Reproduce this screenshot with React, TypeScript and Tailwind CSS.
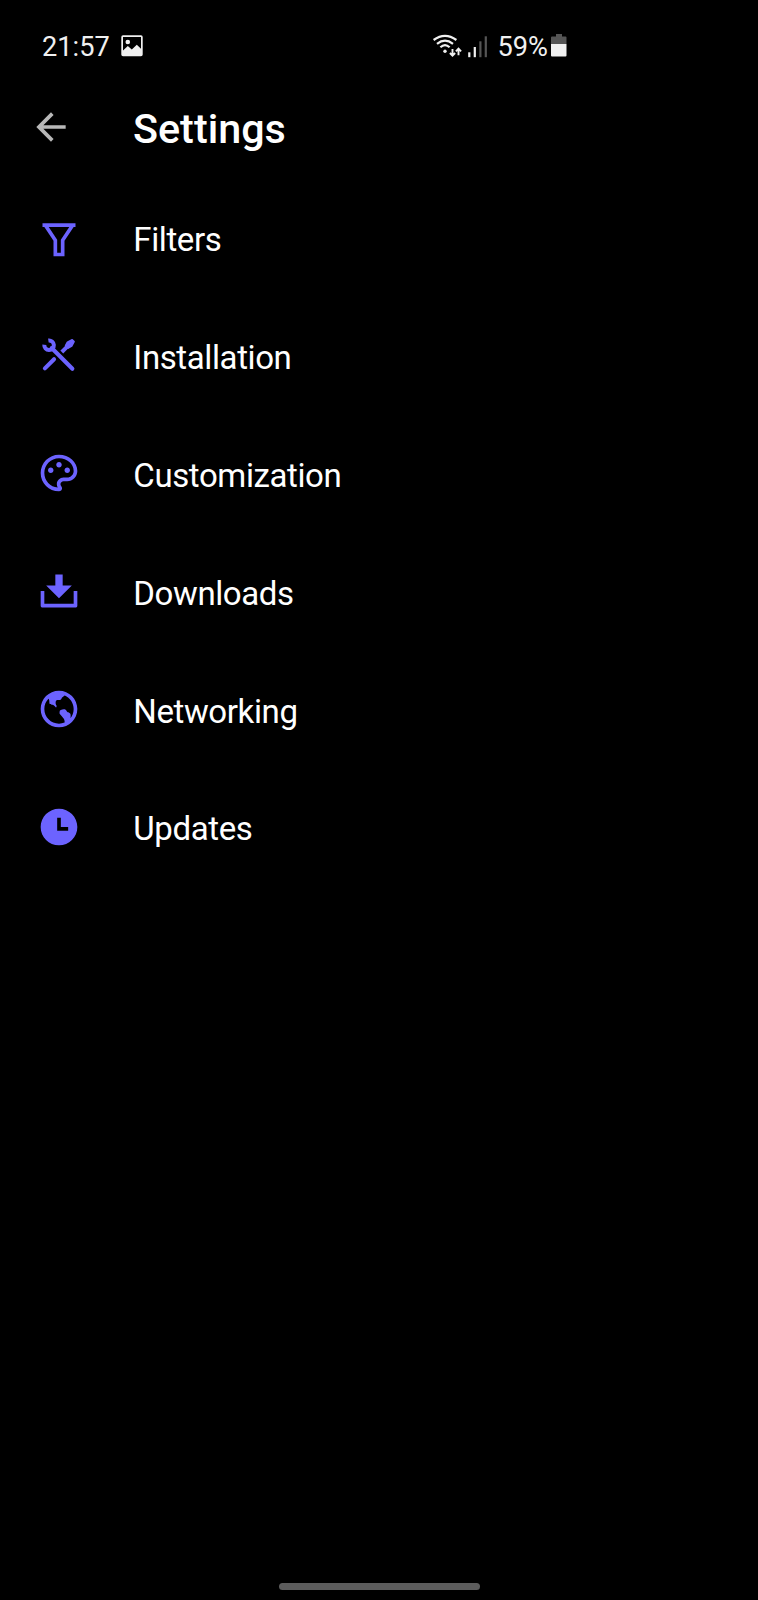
import type { ComponentType } from "react";
import { MdArrowBack } from "react-icons/md";
import { RiDownload2Fill, RiEarthLine, RiFilterLine, RiPaletteLine, RiTimeFill } from "react-icons/ri";

function ToolsIcon({ className }: { className?: string }) {
  return (
    <svg viewBox="0 0 24 24" fill="none" stroke="currentColor" className={className}>
      <g strokeWidth="2.2" strokeLinecap="round">
        <path d="M4 6.400A2.600 2.600 0 1 0 6.200 4.100" strokeLinecap="butt" strokeWidth="2.200" />
        <path d="M8 8.200L19.300 19.500" />
        <path d="M9.300 14.300L4.300 19.300" />
        <path d="M14.300 9.600L16.500 7.400" strokeLinecap="square" />
      </g>
      <path
        d="M15.600 6.900L16.600 5L19.200 3.700L20.200 4.700L18.900 7.100L17 8.200z"
        fill="currentColor"
        strokeWidth="0.900"
        strokeLinejoin="round"
      />
    </svg>
  );
}

const items: { label: string; icon: ComponentType<{ className?: string }> }[] = [
  { label: "Filters", icon: RiFilterLine },
  { label: "Installation", icon: ToolsIcon },
  { label: "Customization", icon: RiPaletteLine },
  { label: "Downloads", icon: RiDownload2Fill },
  { label: "Networking", icon: RiEarthLine },
  { label: "Updates", icon: RiTimeFill },
];

function ImageIcon() {
  return (
    <svg width="22" height="22" viewBox="0 0 22 22" className="ml-[11px]">
      <path
        fillRule="evenodd"
        fill="#f0f0f0"
        d="M2 0.300h18a1.700 1.700 0 0 1 1.700 1.700v17.600a1.700 1.700 0 0 1-1.700 1.700H2A1.700 1.700 0 0 1 .300 19.600V2A1.700 1.700 0 0 1 2 .300zM2 2v13.500l4.800-4.400 4 3.400 5-4.800 4.200 4V2z"
      />
      <circle cx="6.800" cy="7" r="2.300" fill="#f0f0f0" />
    </svg>
  );
}

function SignalIcons() {
  return (
    <svg width="60" height="30" viewBox="0 0 60 30" fill="none">
      <g stroke="#f0f0f0" strokeWidth="2.200">
        <path d="M1.600 9Q13 0.800 24.400 9" />
        <path d="M5 12.800Q13 6.400 21 12.800" />
        <path d="M8.400 16.300Q13 11.800 17.600 16.300" />
        <path d="M20.500 18v6.500M17.900 22l2.600 2.600 2.600-2.600" strokeWidth="1.900" />
        <path d="M26.500 24.300v-6.500M23.900 20.300l2.600-2.600 2.600 2.600" strokeWidth="1.900" />
      </g>
      <circle cx="13" cy="20.300" r="1.700" fill="#f0f0f0" />
      <rect x="36.200" y="21.300" width="2.200" height="4.900" fill="#f0f0f0" />
      <rect x="41.700" y="16" width="2.200" height="10.200" fill="#f0f0f0" />
      <rect x="47.300" y="10.300" width="2.200" height="15.900" fill="#555555" />
      <rect x="52.700" y="5.300" width="2.200" height="20.900" fill="#555555" />
    </svg>
  );
}

function BatteryIcon() {
  return (
    <svg width="16" height="24" viewBox="0 0 16 24" className="mb-px ml-[3px]">
      <path d="M5 1h6v2.500h3.500a1 1 0 0 1 1 1V11H0V4.500a1 1 0 0 1 1-1h4z" fill="#555555" />
      <path d="M0 11h15.500v11.500a1 1 0 0 1-1 1H1a1 1 0 0 1-1-1z" fill="#f0f0f0" />
    </svg>
  );
}

function StatusBar() {
  return (
    <div className="flex h-[92px] items-center pr-[191px] pl-[42px] text-[27.200px] text-[#f0f0f0]">
      <span className="pt-[2px]">21:57</span>
      <ImageIcon />
      <div className="ml-auto flex items-center">
        <SignalIcons />
        <span className="ml-[6px] pt-[2px]">59%</span>
        <BatteryIcon />
      </div>
    </div>
  );
}

export default function App() {
  return (
    <div className="flex h-[1600px] w-[758px] flex-col bg-black font-[Roboto,sans-serif] text-white">
      <StatusBar />

      <header className="flex h-[86.700px] items-start pl-[29px]">
        <button type="button" className="mt-[13.300px] text-[#b8b8b8]">
          <MdArrowBack className="size-[44px]" />
        </button>
        <h1 className="mt-[13px] ml-[60px] text-[41.300px] leading-[48px] font-medium">Settings</h1>
      </header>

      <ul>
        {items.map(({ label, icon: Icon }) => (
          <li key={label} className="flex h-[117.800px] items-center pl-[37.300px]">
            <Icon className="size-[44px] text-[#6c63ff]" />
            <span className="ml-[52px] pt-[5.500px] text-[33px] leading-[40px] tracking-[-0.390px]">{label}</span>
          </li>
        ))}
      </ul>

      <div className="mx-auto mt-auto mb-[10px] h-[7px] w-[201px] rounded-full bg-[#5c5c5c]" />
    </div>
  );
}
